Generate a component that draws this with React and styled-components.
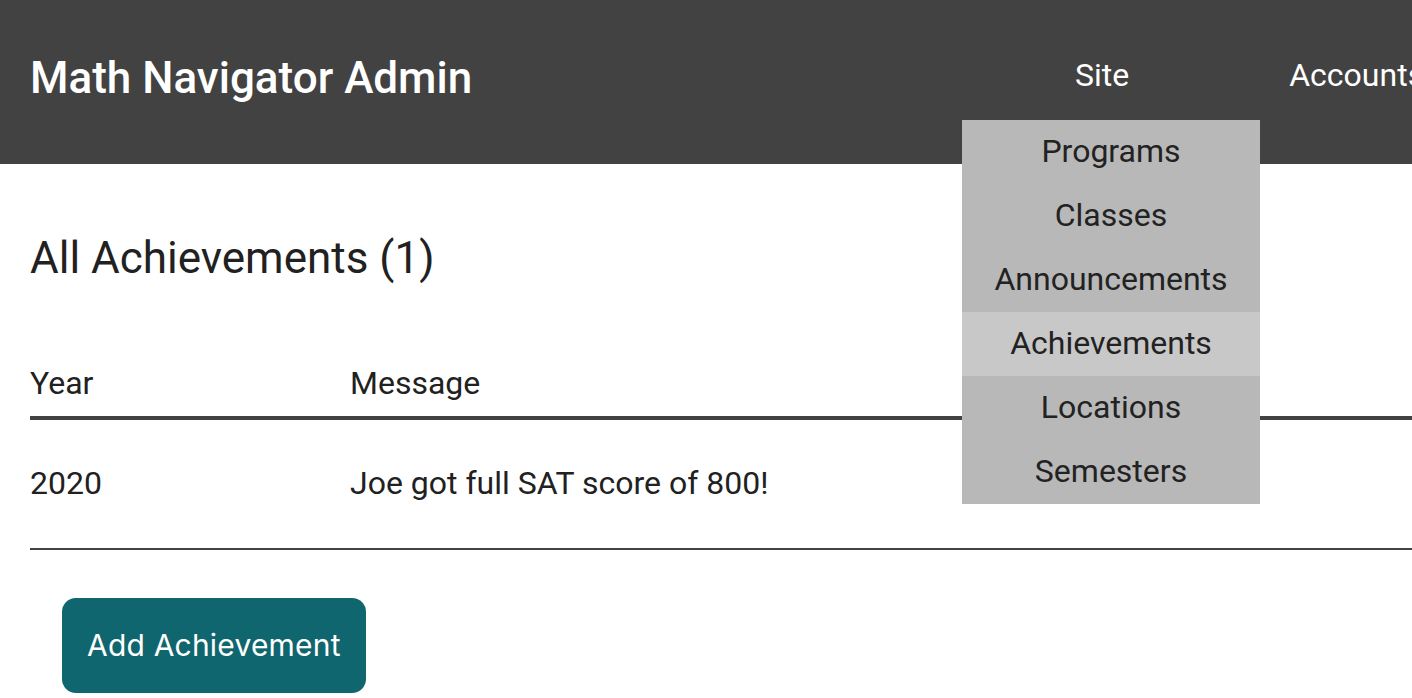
import React from "react";
import styled, { createGlobalStyle } from "styled-components";

const GlobalStyle = createGlobalStyle`
  html, body {
    margin: 0;
    padding: 0;
    background: #ffffff;
    overflow: hidden;
  }
  body {
    font-family: Roboto, "Liberation Sans", Arial, sans-serif;
    color: #212121;
  }
  * { box-sizing: border-box; }
`;

const Header = styled.header`
  height: 164px;
  background: #424242;
  display: flex;
  align-items: flex-start;
  padding: 56px 0 0 30px;
  white-space: nowrap;
  position: relative;
  z-index: 2;
`;

const Title = styled.h1`
  flex: 0 0 1045px;
  margin: 0;
  font-size: 44px;
  line-height: 1;
  font-weight: 500;
  color: #ffffff;
`;

const NavList = styled.nav`
  display: flex;
  gap: 160px;
  flex-shrink: 0;
  margin-top: 3px;
`;

const NavItem = styled.div`
  position: relative;
  font-size: 32px;
  line-height: 1;
  color: #ffffff;
  flex-shrink: 0;
`;

const Dropdown = styled.ul`
  position: absolute;
  top: 61px;
  left: -113px;
  width: 298px;
  margin: 0;
  padding: 0;
  list-style: none;
  background: #b8b8b8;
`;

const DropdownItem = styled.li`
  height: 64px;
  line-height: 62px;
  padding-bottom: 2px;
  text-align: center;
  font-size: 32px;
  color: #222222;
  background: ${(p) => (p.$active ? "#c8c8c8" : "#b8b8b8")};
`;

const Main = styled.main`
  padding: 72px 0 0 30px;
`;

const Heading = styled.h2`
  margin: 0 0 87px;
  font-size: 44px;
  line-height: 1;
  font-weight: 400;
  color: #212121;
`;

const Table = styled.table`
  width: 100%;
  border-collapse: collapse;
`;

const HeadCell = styled.th`
  text-align: left;
  font-weight: 400;
  font-size: 32px;
  line-height: 1;
  padding: 0 0 17px;
  border-bottom: 4px solid #424242;
  width: ${(p) => p.$width || "auto"};
`;

const Cell = styled.td`
  font-size: 32px;
  line-height: 1;
  padding: 47px 0 49px;
  border-bottom: 2px solid #424242;
`;

const Actions = styled.div`
  padding: 48px 0 0 32px;
`;

const AddButton = styled.button`
  font-family: Inter, "Liberation Sans", Arial, sans-serif;
  font-size: 30px;
  letter-spacing: 0.2px;
  line-height: 39px;
  padding: 28px 25px;
  border: none;
  border-radius: 14px;
  background: #10666e;
  color: #ffffff;
  cursor: pointer;
`;

const siteLinks = [
  "Programs",
  "Classes",
  "Announcements",
  "Achievements",
  "Locations",
  "Semesters",
];

export default function App() {
  return (
    <>
      <GlobalStyle />
      <Header>
        <Title>Math Navigator Admin</Title>
        <NavList>
          <NavItem>
            Site
            <Dropdown>
              {siteLinks.map((l) => (
                <DropdownItem key={l} $active={l === "Achievements"}>
                  {l}
                </DropdownItem>
              ))}
            </Dropdown>
          </NavItem>
          <NavItem>Accounts</NavItem>
        </NavList>
      </Header>
      <Main>
        <Heading>All Achievements (1)</Heading>
        <Table>
          <thead>
            <tr>
              <HeadCell $width="320px">Year</HeadCell>
              <HeadCell>Message</HeadCell>
            </tr>
          </thead>
          <tbody>
            <tr>
              <Cell>2020</Cell>
              <Cell>Joe got full SAT score of 800!</Cell>
            </tr>
          </tbody>
        </Table>
        <Actions>
          <AddButton>Add Achievement</AddButton>
        </Actions>
      </Main>
    </>
  );
}
